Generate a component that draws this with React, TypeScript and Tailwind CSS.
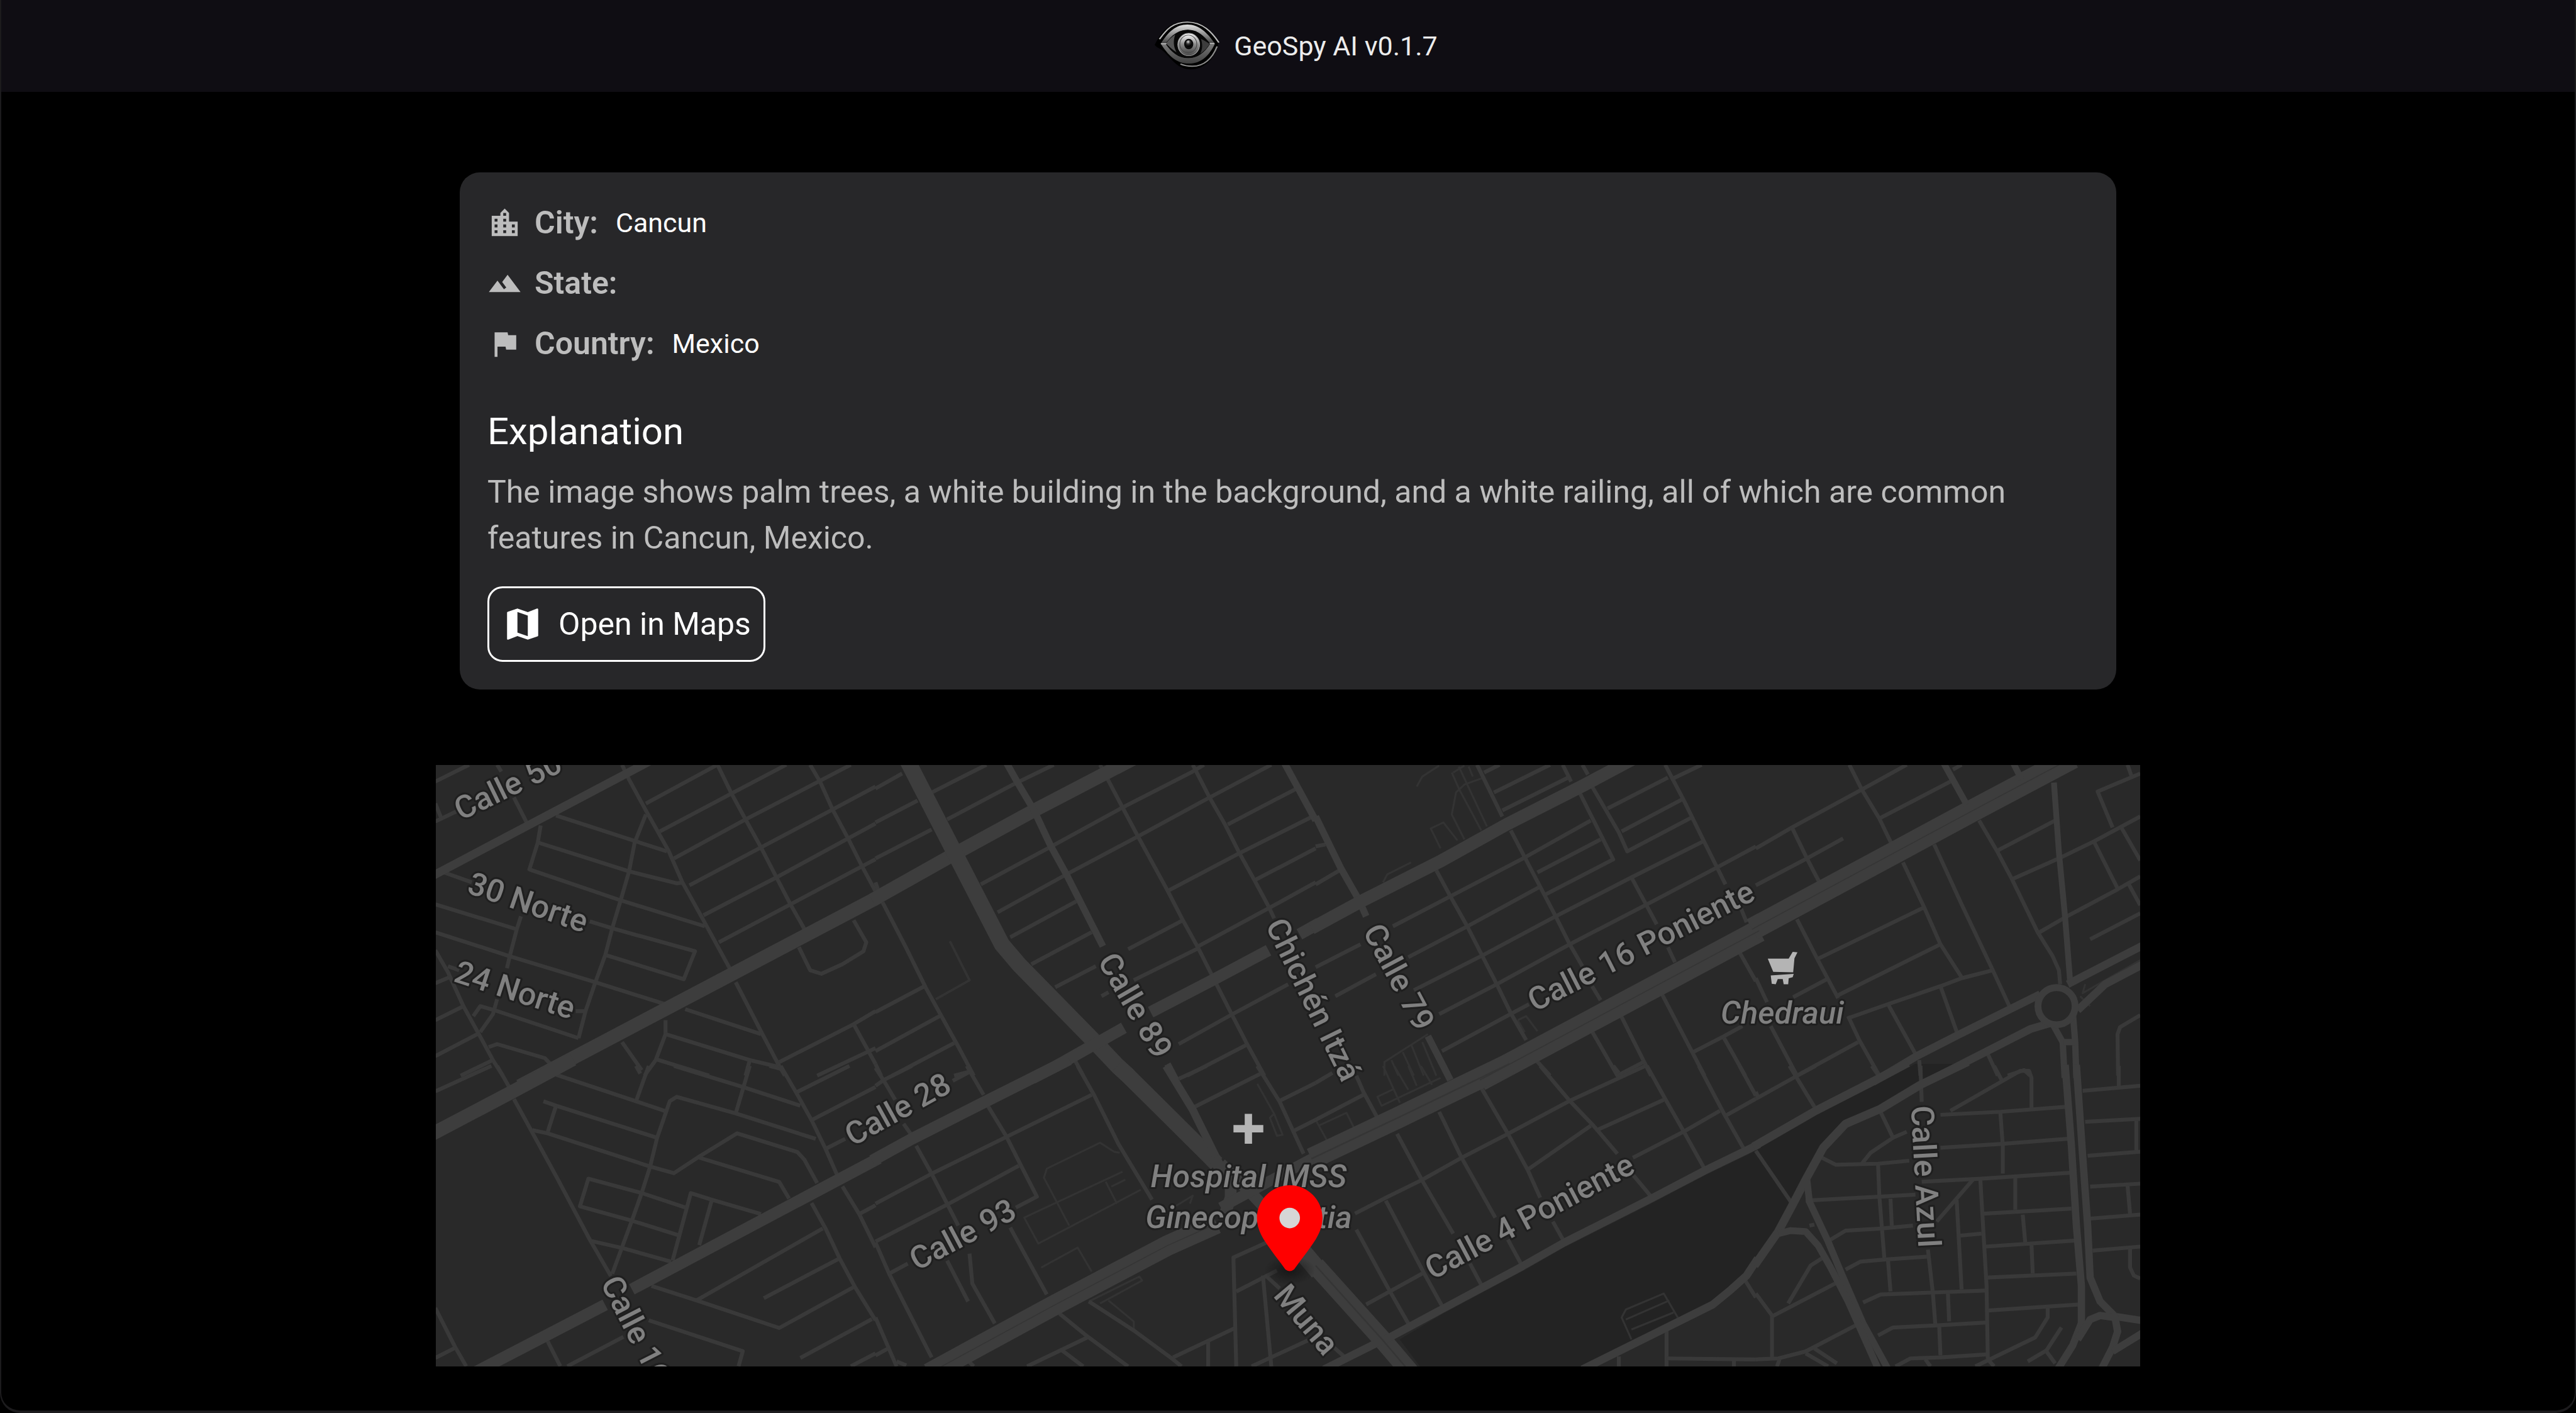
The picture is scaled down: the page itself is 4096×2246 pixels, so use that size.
import { MdFlag, MdLocationCity, MdMap, MdTerrain } from 'react-icons/md';

type Tile = { x: number; y: number; sx: number; sy: number };
type Street = { tile: Tile; width: number; lines: string[] };

// The map is stored in eight tiles, each with its own origin and scale
const tiles = {
    a: { x: 890, y: 1560, sx: 1.742, sy: 2.45 },
    b: { x: 1790, y: 1560, sx: 1.742, sy: 2.45 },
    c: { x: 2690, y: 1560, sx: 1.742, sy: 2.45 },
    d: { x: 3590, y: 1560, sx: 1.96, sy: 2.45 },
    e: { x: 890, y: 2180, sx: 1.742, sy: 2.2116 },
    f: { x: 1790, y: 2180, sx: 1.742, sy: 2.45 },
    g: { x: 2690, y: 2180, sx: 1.742, sy: 2.45 },
    h: { x: 3590, y: 2180, sx: 1.96, sy: 2.45 },
};

const project = (tile: Tile, line: string) =>
    line
        .split(' ')
        .map((pair) => {
            const [x, y] = pair.split(',').map(Number);
            return `${(tile.x + x / tile.sx).toFixed(1)},${(tile.y + y / tile.sy).toFixed(1)}`;
        })
        .join(' ');

const footways: Street[] = [
    {
        tile: tiles.b,
        width: 5,
        lines: ['265,895 335,1090 215,1185'],
    },
    {
        tile: tiles.c,
        width: 4,
        lines: [
            '360,120 380,70 440,15',
            '445,430 410,330 455,300 505,390',
            '530,385 485,260 500,150 530,110 600,75',
            '485,50 510,130 590,340',
            '490,50 530,15',
            '510,20 610,320',
            '545,20 560,70',
            '240,600 255,560 340,500',
            '720,1290 750,1270 790,1345',
            '720,1290 745,1350',
            '245,1568 245,1500 300,1450 400,1360',
            '270,1490 295,1568',
            '310,1450 350,1568',
            '340,1410 385,1568',
            '380,1400 430,1568',
        ],
    },
    {
        tile: tiles.d,
        width: 4,
        lines: ['1320,1110 1310,1155 1541,990', '1300,1170 1340,1220'],
    },
    {
        tile: tiles.f,
        width: 4,
        lines: [
            '1360,90 1420,240 1405,260 1430,350 1450,345 1420,240',
            '590,1010 720,910 770,1030',
            '870,435 850,430 800,385 610,515 600,560 690,800',
            '880,530 530,760 580,890 945,620',
            '820,580 860,690',
            '840,605 890,570',
            '760,1180 940,1055 950,1075 800,1190',
            '830,1175 920,1280 920,1325',
            '1060,710 1130,650 1120,690',
        ],
    },
    {
        tile: tiles.g,
        width: 4,
        lines: [
            '10,300 110,235 140,320',
            '0,270 45,385',
            '240,0 300,185',
            '280,0 330,120',
            '330,0 360,100',
            '375,0 415,95',
            '280,115 220,155 235,200 445,60',
            '1125,1370 1090,1260 1105,1220 1240,1140 1290,1260',
            '1105,1270 1260,1175',
            '1125,1320 1275,1235',
        ],
    },
];

const streets: Street[] = [
    {
        tile: tiles.a,
        width: 8,
        lines: [
            '0,95 120,11',
            '0,295 85,238',
            '0,205 20,275',
            '220,11 235,45',
            '280,175 325,300',
            '665,11 690,85 750,240 830,440 880,600 955,790 1050,1035',
            '750,205 1005,11',
            '800,345 1055,155 1250,11',
            '850,480 1105,285 1365,95 1480,11',
            '905,615 1160,425 1415,235 1568,120',
            '955,765 1215,575 1470,380 1568,305',
            '1010,900 1265,710 1520,520 1568,484',
            '1005,11 1055,155 1105,285 1160,425 1215,575 1265,710 1315,835',
            '1335,11 1370,95 1415,235 1470,380 1520,520 1568,645',
            '430,265 825,445',
            '375,315 365,400 335,535 660,690 960,820',
            '365,400 690,545 860,605 885,600',
            '750,260 710,400 690,545 660,690 630,830 605,965 570,1100 535,1245 510,1380',
            '30,550 130,600',
            '550,795 630,830 925,945 885,1085 610,965',
            '0,710 290,835',
            '305,770 290,835 265,970 255,1030',
            '0,850 265,970 570,1100 830,1215',
            '0,940 45,1050 100,1220 155,1360 205,1490 240,1568',
            '45,1020 85,1040',
            '0,1105 50,1075',
            '0,1290 100,1220',
            '500,1245 535,1245',
            '220,1185 205,1260 160,1350',
            '135,1270 160,1220 210,1240 510,1380',
            '0,1470 150,1360',
            '90,1568 205,1490',
            '190,1425 220,1410 390,1480 410,1510',
            '1295,925 1335,1040 1375,1058 1450,1010 1525,945 1535,900 1490,790',
            '1070,1100 1165,1360 1225,1520 1245,1568',
            '890,1235 1160,1360',
            '820,1290 820,1360 785,1490 745,1568',
            '820,1360 1120,1490 1225,1525',
            '665,1400 735,1540',
            '785,1485 975,1568',
            '1120,1490 1105,1568',
            '1225,1500 1490,1310 1568,1245',
            '1490,1310 1568,1510',
            '1360,1568 1568,1430',
        ],
    },
    {
        tile: tiles.b,
        width: 8,
        lines: [
            '0,130 95,55',
            '0,300 150,190',
            '0,480 200,335',
            '200,150 395,11',
            '255,285 490,110 635,11',
            '375,610 620,425 880,225 1130,45 1170,11',
            '435,750 680,560 935,370 1190,175 1410,11',
            '480,875 715,695',
            '555,1010 770,850',
            '640,1125 785,1020',
            '805,1170 830,1150',
            '800,11 880,225 935,370 1040,640 1095,790 1150,930 1200,1070 1265,1250 1320,1400 1385,1568',
            '1130,11 1190,175 1245,310 1295,450 1350,590 1400,720 1420,780',
            '1255,310 1500,130',
            '1045,640 1295,455 1550,275',
            '1350,590 1568,430',
            '1150,920 1400,730 1568,600',
            '900,935 1095,790',
            '920,1090 1150,930',
            '1080,1410 1265,1265 1470,1110',
            '1110,1568 1320,1415',
            '25,700 110,930 180,1130 235,1270 290,1410 350,1568',
            '0,1250 175,1120',
            '0,1445 235,1265',
            '60,1568 280,1405',
            '0,1510 20,1568',
            '710,1490 740,1568',
            '0,600 10,640',
            '280,1568 330,1550',
        ],
    },
    {
        tile: tiles.c,
        width: 8,
        lines: [
            '0,420 35,410',
            '0,610 85,540',
            '575,11 665,270',
            '600,50 655,11',
            '635,150 835,11',
            '665,240 900,75',
            '880,11 910,95',
            '950,11 970,60',
            '275,820 480,670 745,475 980,290',
            '0,1025 160,910',
            '70,1170 215,1060',
            '330,975 540,820 795,625',
            '790,550 1015,385',
            '820,660 1060,485 940,150',
            '985,120 1080,350 1110,445 1340,275',
            '1040,230 1255,75',
            '1090,345 1305,185',
            '350,1140 595,965 855,770 1125,575 1380,395',
            '440,1260 645,1110 905,910 1180,710 1430,525 1568,420',
            '450,1445 700,1255 760,1210',
            '430,540 480,670 540,820 645,1110 695,1255 750,1390',
            '695,340 745,475 855,770 905,910 950,1020',
            '985,1120 1015,1190',
            '1125,575 1215,810',
            '1255,925 1280,1000',
            '1245,11 1310,185 1380,385 1460,610',
            '1515,730 1535,800',
            '1265,85 1375,11',
            '1510,950 1568,1095',
            '1230,1150 1385,1568',
            '1085,1260 1195,1568',
            '980,1335 1075,1568 1175,1495',
            '785,1490 835,1568',
            '1345,1450 1455,1370 1520,1320',
            '1455,1380 1530,1568',
        ],
    },
    {
        tile: tiles.d,
        width: 8,
        lines: [
            '0,430 145,325 425,135 605,11',
            '0,615 205,480 350,380',
            '145,325 205,480 255,600',
            '375,11 425,135 495,280 545,410',
            '495,280 780,95',
            '790,35 825,11',
            '165,785 245,980 330,1180',
            '370,1270 415,1390 495,1568',
            '245,985 675,725',
            '330,1165 740,910',
            '590,500 675,725 740,910 825,1075',
            '715,410 825,710 950,1040 1020,1230',
            '370,1280 530,1210 740,1120 825,1080 950,1040',
            '530,1210 645,1470',
            '740,1120 810,1365',
            '895,290 970,450 1025,580 1130,850 1190,970 1215,1040 1220,1110',
            '970,440 1200,290',
            '1025,585 1215,480 1355,395 1541,270',
            '1130,855 1240,775 1450,635 1541,570',
            '1355,395 1450,630',
            '1465,325 1541,490',
            '1541,55 1370,145 1430,325',
            '1490,11 1505,65',
            '1495,610 1541,715',
            '1340,885 1541,755',
            '1541,1265 1460,1325 1450,1360 1452,1568',
            '0,1080 45,1200',
            '60,1320 165,1568 410,1400',
            '150,1175 285,1085',
            '655,1490 660,1568',
            '930,1460 970,1568',
            '1010,1568 1075,1540 1100,1568',
        ],
    },
    {
        tile: tiles.e,
        width: 8,
        lines: [
            '0,115 200,0',
            '220,0 265,100',
            '280,150 345,300 435,510 550,785 625,950',
            '430,40 715,160 820,205',
            '760,0 715,160',
            '715,0 730,35',
            '385,160 430,180 790,325',
            '430,180 400,300',
            '345,290 400,305 765,455 850,485 940,410 1075,305 1290,390 1315,425 1360,530',
            '1355,330 1070,215 860,140 835,160 790,325 765,455 735,575 700,700 630,940',
            '850,0 1095,95 1300,180',
            '1120,0 1070,215',
            '1190,0 1235,15',
            '1230,0 1285,120 1340,245 1390,375 1430,490',
            '1450,545 1510,670 1568,820',
            '1285,120 1475,0',
            '1340,245 1568,95',
            '1390,375 1460,330',
            '940,415 1225,525 1260,600',
            '890,640 735,575 545,510 515,635 700,700 865,765',
            '550,790 670,825 840,885',
            '845,880 910,575 985,605 1160,670',
            '985,605 940,810',
            '770,995 930,1060 1225,1185 1490,1000',
            '930,1060 1380,735',
            '1170,1050 1440,870',
            '1340,620 1390,735 1440,870 1495,1000 1568,1150',
            '1300,1320 1555,1145',
            '1480,1358 1568,1300',
            '760,1150 1095,1290 1080,1358',
            '400,1245 445,1358',
            '470,1358 670,1225',
            '0,1095 70,1270 110,1358',
            '0,1320 70,1275',
            '1510,670 1568,630',
        ],
    },
    {
        tile: tiles.f,
        width: 8,
        lines: [
            '0,100 30,70 130,0',
            '0,10 30,75 70,170',
            '100,290 125,340',
            '275,75 335,30',
            '325,0 385,145',
            '400,200 465,350 515,490 575,655 500,710',
            '720,0 780,150 865,390 985,670',
            '1080,65 1180,0',
            '1130,210 1370,40',
            '1360,0 1440,180 1525,440',
            '1440,175 1568,85',
            '1490,325 1568,270',
            '145,400 200,540 255,690 295,800',
            '0,690 200,540 460,360 770,145',
            '0,880 255,695 510,500',
            '0,885 50,1045 200,1460',
            '50,1040 115,990',
            '255,975 330,1180',
            '335,940 345,1090 425,1290',
            '480,810 610,1145',
            '655,1240 755,1355 900,1505',
            '760,1180 920,1325 1060,1470 1090,1505',
            '540,1505 755,1360',
            '660,1420 740,1505',
            '1060,1460 1285,1310',
            '1185,1380 1185,1505',
            '1400,880 1275,960 1285,1505',
            '1285,1130 1430,1025',
            '1380,1050 1410,1505',
            '1390,1050 1440,1115',
            '1340,1505 1540,1375',
            '0,1260 75,1505',
            '0,1450 45,1415',
            '75,1480 110,1500',
            '325,1470 350,1505',
        ],
    },
    {
        tile: tiles.g,
        width: 8,
        lines: [
            '0,85 60,35',
            '145,50 170,130 220,260',
            '0,270 170,145',
            '290,340 380,575 490,840',
            '550,990 595,1110',
            '440,230 520,460 640,760',
            '685,870 735,1000',
            '590,110 685,340 755,520 800,660',
            '845,780 885,880',
            '800,0 905,175 990,300 1075,440',
            '1130,545 1195,655',
            '140,740 250,660 380,570 520,460 685,340 905,175 1175,0',
            '1060,0 1080,35',
            '1180,0 1245,165 1310,325 1385,515',
            '1365,0 1455,240 1525,415',
            '1510,0 1568,150',
            '1005,320 1240,170',
            '755,520 980,300',
            '1130,460 1310,330 1440,225',
            '1460,250 1568,165',
            '250,675 385,1035 455,1215',
            '145,820 265,1130 330,1290',
            '180,1195 380,1040',
            '65,1410 105,1460',
            '1250,1320 1250,1505',
            '1250,1465 1568,1470',
            '1490,1470 1490,1505',
            '1080,1455 1080,1505',
            '1530,1075 1568,1160',
        ],
    },
    {
        tile: tiles.h,
        width: 8,
        lines: [
            '0,165 165,50 240,0',
            '135,0 240,215',
            '0,130 10,160',
            '465,0 490,45',
            '0,425 140,680',
            '660,0 665,180',
            '955,0 985,70',
            '780,225 1060,25 1095,25 1105,60 1105,210',
            '740,245 980,230 1240,205',
            '980,230 990,400 990,540',
            '740,410 990,390 1250,365',
            '665,580 900,565 1260,535',
            '500,230 550,360 605,330',
            '550,360 460,435 425,490',
            '265,460 320,495 490,490 615,475',
            '490,490 495,650 515,960',
            '200,675 495,655 640,645',
            '540,665 545,800',
            '300,870 360,825 500,815 630,800',
            '215,800 235,795',
            '360,1020 420,980 515,970 690,955',
            '530,975 540,1130',
            '690,920 710,1140 720,1300',
            '735,1300 740,1450',
            '430,1185 500,1145 710,1135 920,1125',
            '770,1140 775,1280',
            '490,1350 550,1310 720,1300 925,1285',
            '560,1505 620,1465 740,1460 925,1445',
            '680,1470 700,1505',
            '725,780 870,570',
            '805,670 825,1120',
            '820,850 905,840',
            '900,570 925,1100 930,1470 955,1505',
            '1040,560 1040,720',
            '915,740 1265,715',
            '1070,745 1080,885',
            '920,905 1280,875',
            '1105,895 1110,1040',
            '930,1060 1285,1040',
            '930,1225 1295,1195',
            '880,1505 1120,1360 1170,1260 1170,1210',
            '1090,1480 1165,1425 1225,1310',
            '1165,1430 1200,1490',
            '1310,125 1541,100',
            '1455,0 1455,110',
            '1320,280 1541,265',
            '1525,275 1525,425',
            '1330,450 1541,430',
            '1340,605 1541,590',
            '1490,600 1500,740',
            '1340,765 1541,745',
            '1350,925 1541,905',
            '1500,915 1500,1010 1515,1050 1541,1065',
            '0,1140 65,1250 65,1470',
            '65,1255 325,1085',
            '130,1190 220,1000 270,960',
            '0,1470 90,1465 200,1430 400,1300',
            '235,1415 325,1490',
            '200,1440 290,1505',
            '95,1470 85,1505',
        ],
    },
];

const avenues: Street[] = [
    { tile: tiles.a, width: 17, lines: ['-20,575 740,11 780,-20'] },
    { tile: tiles.a, width: 28, lines: ['300,1620 1580,672'] },
    { tile: tiles.b, width: 28, lines: ['-12,690 285,455 565,240 920,-20'] },
    { tile: tiles.b, width: 33, lines: ['110,-20 285,460 450,910 510,1010 782,1400 862,1519 900,1568'] },
    { tile: tiles.b, width: 14, lines: ['460,-15 510,110 565,240 625,420 680,560 810,920', '1040,1510 1070,1590'] },
    { tile: tiles.b, width: 14, lines: ['1450,-15 1568,290'] },
    { tile: tiles.b, width: 24, lines: ['560,1580 645,1519 885,1328', '980,1250 1200,1090 1400,940', '1510,860 1580,805'] },
    { tile: tiles.c, width: 14, lines: ['0,270 90,530 155,690 180,770', '400,1370 480,1590'] },
    { tile: tiles.c, width: 26, lines: ['-15,830 155,700 450,490 680,310 960,110 1140,-25'] },
    { tile: tiles.c, width: 46, lines: ['585,1590 1580,842'] },
    { tile: tiles.d, width: 46, lines: ['-15,835 870,240 1270,-25'] },
    { tile: tiles.d, width: 13, lines: ['745,-15 845,210', '1025,-15 1065,85'] },
    { tile: tiles.d, width: 12, lines: ['1195,100 1215,450 1240,780 1260,1100'] },
    { tile: tiles.d, width: 16, lines: ['470,1600 645,1470 810,1365 1140,1160', '1250,1110 1560,910', '700,1590 1100,1335 1180,1305', '1560,1005 1400,1110 1290,1240'] },
    { tile: tiles.d, width: 13, lines: ['1190,1310 1230,1400 1238,1580', '1270,1240 1280,1400 1285,1580', '1235,1400 1280,1400'] },
    { tile: tiles.e, width: 28, lines: ['-15,310 270,120 490,-30'] },
    { tile: tiles.e, width: 24, lines: ['120,1400 605,1080', '700,1010 1580,417'] },
    { tile: tiles.f, width: 24, lines: ['-12,475 130,365 390,180 645,0 690,-32'] },
    { tile: tiles.f, width: 33, lines: ['862,0 900,49 1180,440 1215,490'] },
    { tile: tiles.f, width: 16, lines: ['1035,0 1130,220 1225,490'] },
    { tile: tiles.f, width: 24, lines: ['1205,460 1265,600 1265,660 1245,740', '1230,490 1340,640 1400,730'] },
    { tile: tiles.f, width: 42, lines: ['190,1540 635,1200 1040,900 1215,790'] },
    { tile: tiles.f, width: 22, lines: ['1230,710 1400,580 1568,455'] },
    { tile: tiles.f, width: 38, lines: ['1400,730 1580,1030'] },
    { tile: tiles.g, width: 44, lines: ['-15,465 300,255 690,-10'] },
    { tile: tiles.g, width: 38, lines: ['0,1000 240,1375 340,1540'] },
    { tile: tiles.g, width: 16, lines: ['30,1520 215,1390 270,1355 455,1215 595,1110 735,1005 885,885 1195,665 1385,525 1580,392'] },
    { tile: tiles.g, width: 16, lines: ['950,1520 1415,1195 1480,1120 1535,1050 1575,965'] },
    { tile: tiles.h, width: 17, lines: ['-10,405 240,225 490,65 610,-15', '850,-20 660,95 500,215 360,290 270,410 200,570 150,690 90,830 -5,1000'] },
    { tile: tiles.h, width: 14, lines: ['205,570 215,680 290,880 340,1030 430,1290 535,1530', '90,840 140,825 200,830 250,900 300,1010 370,1180 495,1530'] },
    { tile: tiles.h, width: 15, lines: ['1240,-5 1265,400 1285,800 1305,1100 1305,1290 1270,1400 1210,1520', '1285,-5 1310,450 1330,800 1340,1060 1380,1180 1440,1255 1560,1278'] },
    { tile: tiles.h, width: 15, lines: ['1290,1370 1340,1270 1380,1250 1440,1260 1450,1330 1430,1410 1385,1520', '1430,1430 1560,1330'] },
];

// Dark hairlines between the two carriageways
const medians: Street[] = [
    { tile: tiles.c, width: 2, lines: ['585,1590 1580,842'] },
    { tile: tiles.d, width: 2, lines: ['-15,835 870,240 1270,-25'] },
    { tile: tiles.f, width: 2, lines: ['190,1540 635,1200 1040,900 1215,790'] },
    { tile: tiles.g, width: 3, lines: ['-15,465 300,255 690,-10', '0,1000 240,1375 340,1540'] },
];

const parks = [
    { tile: tiles.g, shape: '300,1370 455,1240 735,1030 885,910 1195,690 1385,550 1568,425 1575,930 1530,1060 1415,1195 950,1520 380,1520' },
    { tile: tiles.h, shape: '-10,410 640,-10 820,-10 660,95 500,215 360,290 270,410 200,600 150,690 80,850 -10,990' },
];

const streetLabels = [
    { text: 'Calle 50', x: 1038, y: 1607, angle: -26 },
    { text: '30 Norte', x: 1080, y: 1845, angle: 19 },
    { text: '24 Norte', x: 1053, y: 2024, angle: 18 },
    { text: 'Calle 28', x: 1835, y: 2268, angle: -29 },
    { text: 'Calle 93', x: 1968, y: 2524, angle: -28 },
    { text: 'Calle 89', x: 2322, y: 2056, angle: 60 },
    { text: 'Chichén Itzá', x: 2686, y: 2044, angle: 64 },
    { text: 'Calle 79', x: 2861, y: 1998, angle: 62 },
    { text: 'Calle 16 Poniente', x: 3355, y: 1934, angle: -27 },
    { text: 'Calle 4 Poniente', x: 3127, y: 2487, angle: -28 },
    { text: 'Calle Azul', x: 3938, y: 2406, angle: 87 },
    { text: 'Calle 16', x: 1301, y: 2718, angle: 63 },
    { text: 'Muna', x: 2672, y: 2698, angle: 50 },
];

const placeLabels = [
    { text: 'Chedraui', x: 3644, y: 2070 },
    { text: 'Hospital IMSS', x: 2553, y: 2404 },
    { text: 'Ginecopediatia', x: 2553, y: 2487 },
];

const StreetLayer = ({ items, color }: { items: Street[]; color: string }) => (
    <g fill="none" stroke={color} strokeLinejoin="round">
        {items.map(({ tile, width, lines }, index) => (
            <g key={index} strokeWidth={width}>
                {lines.map((line) => (
                    <polyline key={line} points={project(tile, line)} />
                ))}
            </g>
        ))}
    </g>
);

const CityMap = () => (
    <svg
        viewBox="891 1565 3485 1230"
        className="block w-full bg-[#292929] font-[Roboto,sans-serif]"
        role="img"
        aria-label="Map of Cancun"
    >
        {parks.map(({ tile, shape }) => (
            <polygon key={shape} points={project(tile, shape)} fill="#232323" />
        ))}
        <StreetLayer items={footways} color="#333333" />
        <StreetLayer items={streets} color="#393939" />
        <StreetLayer items={avenues} color="#3d3d3d" />
        <circle cx="4205" cy="2058" r="38" fill="#292929" stroke="#3d3d3d" strokeWidth="14" />
        <StreetLayer items={medians} color="#353535" />

        <g
            fontSize="65"
            fontWeight="500"
            fill="#808080"
            stroke="#1f1f1f"
            strokeWidth="8"
            strokeLinejoin="round"
            paintOrder="stroke"
            textAnchor="middle"
        >
            {streetLabels.map(({ text, x, y, angle }) => (
                <text key={text} transform={`translate(${x} ${y}) rotate(${angle})`} y="23">
                    {text}
                </text>
            ))}
            {placeLabels.map(({ text, x, y }) => (
                <text key={text} x={x} y={y + 24} fontStyle="italic">
                    {text}
                </text>
            ))}
        </g>

        {/* Hospital */}
        <path d="M2545 2278h15v23h23v15h-23v23h-15v-23h-23v-15h23z" fill="#b4b4b4" />

        {/* Supermarket */}
        <g fill="#b4b4b4">
            <polygon points={project(tiles.d, '48,982 132,982 148,948 167,950 155,980 150,1050 70,1048')} />
            <polygon points={project(tiles.d, '60,1066 152,1058 148,1075 132,1080 130,1110 112,1110 108,1084 88,1084 80,1110 64,1108')} />
        </g>

        {/* Marker */}
        <defs>
            <radialGradient id="marker-shadow">
                <stop offset="0" stopColor="#111" stopOpacity="0.75" />
                <stop offset="1" stopColor="#111" stopOpacity="0" />
            </radialGradient>
        </defs>
        <ellipse cx="2637" cy="2598" rx="52" ry="30" fill="url(#marker-shadow)" />
        <path
            d="M2637 2424c-37 0-67 30-67 67 0 16 6 31 14 44 14 22 29 40 44 61q9 7 18 0c15-21 30-39 44-61 8-13 14-28 14-44 0-37-30-67-67-67z"
            fill="#f00"
        />
        <circle cx="2637" cy="2491" r="21" fill="#d6d6d6" />
    </svg>
);

const EyeLogo = () => (
    <svg viewBox="0 0 140 94" className="h-[94px] w-[140px]" aria-hidden="true">
        <defs>
            <linearGradient id="lid" x1="0" y1="0" x2="0" y2="1">
                <stop offset="0" stopColor="#e2e2e2" />
                <stop offset="0.55" stopColor="#8a8a8a" />
                <stop offset="1" stopColor="#3c3c3c" />
            </linearGradient>
            <linearGradient id="lower-lid" x1="0" y1="0" x2="0" y2="1">
                <stop offset="0" stopColor="#7a7a7a" />
                <stop offset="1" stopColor="#3f3f3f" />
            </linearGradient>
            <linearGradient id="iris" x1="0" y1="0" x2="0" y2="1">
                <stop offset="0" stopColor="#f2f2f2" />
                <stop offset="0.5" stopColor="#8d8d8d" />
                <stop offset="1" stopColor="#4a4a4a" />
            </linearGradient>
            <radialGradient id="pupil" cx="0.4" cy="0.25" r="0.7">
                <stop offset="0" stopColor="#ddd" />
                <stop offset="0.5" stopColor="#333" />
                <stop offset="1" stopColor="#000" />
            </radialGradient>
        </defs>
        <g transform="scale(0.347 0.259) translate(-63 -100)">
            <path d="M138 275C165 205 200 130 288 130c75 0 110 60 142 130l-5 35c-20 70-60 130-122 130-58 0-85-60-120-105-20-25-35-25-45-45z" fill="#000" />
            <path d="M160 240c32-60 62-105 128-105 70 0 112 62 144 126" fill="none" stroke="#b9b9b9" strokeWidth="7" />
            <path d="M166 268C200 195 235 150 288 150s92 50 126 118l-22 0C362 215 330 182 290 182s-72 32-102 86z" fill="url(#lid)" />
            <path d="M166 268c32 68 70 122 128 122 60 0 96-54 120-122h-22c-28 56-56 88-100 88-46 0-74-32-104-88z" fill="url(#lower-lid)" />
            <path d="M188 268C215 215 245 184 290 184s72 34 102 84c-26 54-56 86-100 86s-76-34-104-86z" fill="#080808" />
            <path d="M190 266c12-22 25-40 42-54-10 40-8 76 6 108-18-14-34-34-48-54z" fill="#555" />
            <path d="M390 270c-12 25-26 44-44 60 12-28 12-60 4-92 16 10 28 20 40 32z" fill="#3d3d3d" />
            <ellipse cx="294" cy="273" rx="50" ry="69" fill="url(#iris)" stroke="#a9a9a9" strokeWidth="3" />
            <ellipse cx="292" cy="270" rx="39" ry="55" fill="url(#iris)" stroke="#444" strokeWidth="3" />
            <ellipse cx="294" cy="270" rx="21" ry="32" fill="#0a0a0a" />
            <ellipse cx="294" cy="266" rx="14" ry="20" fill="url(#pupil)" />
            <path d="M166 268h26M390 266h22" stroke="#ccc" strokeWidth="5" />
            <path d="M424 284c-22 76-62 124-116 122-22 0-38-6-52-14" fill="none" stroke="#8c8c8c" strokeWidth="7" />
        </g>
    </svg>
);

const details = [
    { label: 'City:', value: 'Cancun', Icon: MdLocationCity },
    { label: 'State:', value: '', Icon: MdTerrain },
    { label: 'Country:', value: 'Mexico', Icon: MdFlag },
];

const App = () => {
    return (
        <div className="bg-black">
            <div className="min-h-screen flex flex-col bg-black text-white font-[Roboto,sans-serif] border-x-2 border-b-4 border-[#1c1b1d] rounded-b-[32px] overflow-hidden">
                <header className="h-[146px] flex items-center justify-center gap-3 bg-[#0f0d13]">
                    <EyeLogo />
                    <h1 className="text-[43px] leading-[48px] text-[#ececec]">GeoSpy AI v0.1.7</h1>
                </header>

                <main className="flex flex-col items-center gap-30 pt-32 pb-16">
                    <section className="w-full max-w-[2634px] p-11 rounded-[32px] bg-[#272729]">
                        <dl className="flex flex-col gap-6">
                            {details.map(({ label, value, Icon }) => (
                                <div key={label} className="flex items-center">
                                    <Icon className="size-[55px] text-[#bdbdbd]" />
                                    <dt className="ml-5 text-[50px] leading-[72px] font-semibold text-[#bdbdbd]">{label}</dt>
                                    <dd className="ml-7 text-[43px] leading-[72px]">{value}</dd>
                                </div>
                            ))}
                        </dl>

                        <h2 className="mt-16 text-[60px] leading-[80px]">Explanation</h2>
                        <p className="mt-5 text-[50px] leading-[73px] text-[#bdbdbd]">
                            The image shows palm trees, a white building in the background, and a white railing, all of which are common features in Cancun, Mexico.
                        </p>

                        <button
                            type="button"
                            className="mt-10 h-[120px] px-5 flex items-center gap-6 border-3 border-white rounded-[24px] text-[50px] cursor-pointer"
                        >
                            <MdMap className="size-[66px]" />
                            Open in Maps
                        </button>
                    </section>

                    <div className="w-full max-w-[2710px]">
                        <CityMap />
                    </div>
                </main>
            </div>
        </div>
    );
};

export default App;
